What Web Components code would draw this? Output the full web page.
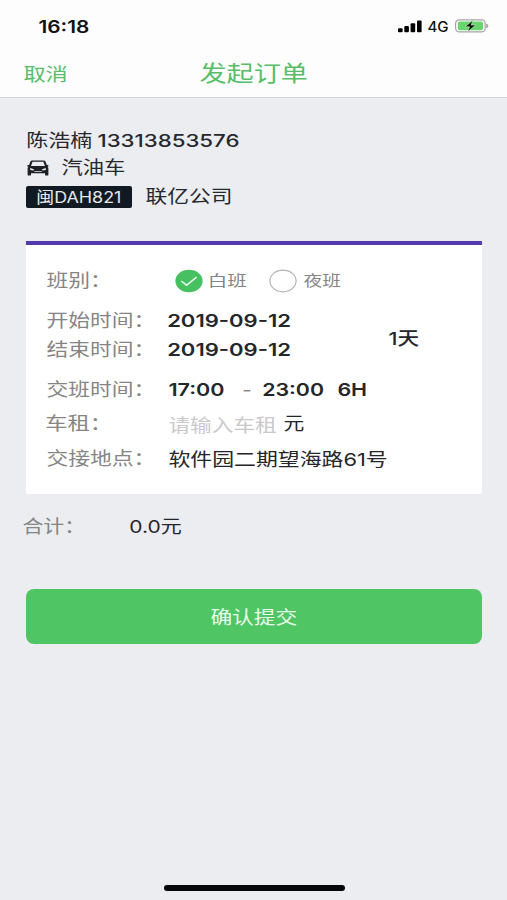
<!DOCTYPE html>
<html lang="zh-CN">
<head>
<meta charset="utf-8">
<title>发起订单</title>
<style>
html,body{margin:0;padding:0}
body{width:507px;height:900px;overflow:hidden;background:#ecedf1;font-family:Inter,"Noto Sans CJK SC",sans-serif}
</style>
</head>
<body>
<order-page></order-page>
<script>
function define(name, html) {
  customElements.define(name, class extends HTMLElement {
    connectedCallback() {
      if (this.shadowRoot) return;
      this.attachShadow({mode: 'open'}).innerHTML = html;
    }
  });
}

// Wide label: its glyphs fill exactly the width given in "w".
const ctx = document.createElement('canvas').getContext('2d');
customElements.define('wide-text', class extends HTMLElement {
  connectedCallback() {
    if (this.shadowRoot) return;
    const size = this.getAttribute('size') || 17.7;
    const weight = this.getAttribute('weight') || 400;
    const width = +this.getAttribute('w');
    const gap = this.getAttribute('gap') || 0;
    const dy = +(this.getAttribute('dy') || 0) + .3;
    const text = this.getAttribute('text');
    ctx.font = `${weight} ${size}px Inter, "Noto Sans CJK SC", sans-serif`;
    const m = ctx.measureText(text);
    const k = width / (m.actualBoundingBoxLeft + m.actualBoundingBoxRight);
    this.attachShadow({mode: 'open'}).innerHTML = `<style>
      :host{display:block;flex:none;width:${width}px;height:24px;margin-left:${gap}px}
      span{display:block;width:max-content;white-space:nowrap;font-size:${size}px;font-weight:${weight};line-height:24px;
        transform-origin:0 50%;transform:translate(${m.actualBoundingBoxLeft * k - .6}px,${dy}px) scaleX(${k})}
      </style><span></span>`;
    this.shadowRoot.querySelector('span').textContent = text;
  }
});

define('signal-bars', `<style>:host{display:block;width:24px;height:13px}svg{display:block}</style>
<svg width="24" height="13" viewBox="0 0 24 13"><rect x="0" y="8.2" width="4.6" height="4" rx="1"/><rect x="6.3" y="6" width="4.6" height="6.2" rx="1"/><rect x="12.6" y="3.3" width="4.6" height="8.9" rx="1"/><rect x="19" y=".5" width="4.6" height="11.7" rx="1"/></svg>`);

define('battery-icon', `<style>:host{display:block;width:34px;height:14px}svg{display:block}</style>
<svg width="34" height="14" viewBox="0 0 34 14"><rect x=".6" y=".9" width="29.6" height="12" rx="3.6" fill="#fff" stroke="#a3a5a3" stroke-width="1.2"/><rect x="2.8" y="2.6" width="25.2" height="8.6" rx="1.8" fill="#6bd56d"/><path d="M31.2 4.6q2.2.6 2.2 2.3t-2.2 2.3z" fill="#a3a5a3"/><path d="M17.8 1.2 10.3 7.8H14.6L12.8 12.8 20.6 6.1H16.2Z" fill="#111" stroke="#d9f5d8" stroke-width=".5"/></svg>`);

define('car-icon', `<style>:host{display:block;width:22px;height:16px}svg{display:block}</style>
<svg width="22" height="16" viewBox="0 0 22 16"><path fill="#1c1f24" fill-rule="evenodd" d="M5.3.4H16.6Q18 .4 18.5 1.6L19.8 5H21.3V6.7H20.4Q21.4 7.3 21.4 8.7V14.8Q21.4 15.4 20.8 15.4H18.6Q18 15.4 18 14.8V13.2H4V14.8Q4 15.4 3.4 15.4H1.2Q.6 15.4 .6 14.8V8.7Q.6 7.3 1.6 6.7H.5V5H2.1L3.4 1.6Q3.8 .4 5.3 .4ZM5.5 1.8 4 5.9H17.9L16.4 1.8ZM3.2 8.1V9.9L6.8 10.6V9.3ZM18.8 8.1 15.2 9.3V10.6L18.8 9.9ZM7.3 10.9V11.8H14.7V10.9Z"/></svg>`);

define('radio-dot', `<style>:host{display:block;width:28px;height:24px;flex:none}svg{display:block}
.on{display:none}:host([checked]) .on{display:block}:host([checked]) .off{display:none}</style>
<svg width="28" height="24" viewBox="0 0 28 24"><g class="off"><ellipse cx="14" cy="12" rx="13.1" ry="10.8" fill="#fff" stroke="#b4b4b4" stroke-width="1.2"/></g><g class="on"><ellipse cx="14" cy="12" rx="13.6" ry="11.2" fill="#47c062"/><path d="M6.3 12 11.6 16.2 21.6 8.2" fill="none" stroke="#e6fbe9" stroke-width="1.5"/></g></svg>`);

define('status-bar', `<style>:host{display:flex;align-items:center;height:52px;padding-left:38.5px;color:#111}
signal-bars{margin-left:308px}battery-icon{margin-left:6px}</style>
<wide-text text="16:18" w="51" size="17" weight="600" dy=".3"></wide-text><signal-bars></signal-bars>
<wide-text text="4G" w="20.5" size="14.2" weight="500" gap="6.5" dy=".3"></wide-text><battery-icon></battery-icon>`);

define('nav-bar', `<style>:host{display:flex;align-items:center;height:45px;padding-left:23.5px;color:#58bd69;border-bottom:1px solid #d5d6d9}</style>
<wide-text text="取消" w="43.5" dy="-.7"></wide-text><wide-text text="发起订单" w="107.5" size="21.8" gap="133" dy="-2.7"></wide-text>`);

define('plate-tag', `<style>:host{display:flex;align-items:center;width:106px;height:22px;box-sizing:border-box;padding-left:12px;border-radius:2px;background:#111a22;color:#e4e8ec}</style>
<wide-text text="闽DAH821" w="82.5" size="15.4" dy=".3"></wide-text>`);

define('driver-info', `<style>:host{display:block;padding:30px 0 0 27px;color:#26282d}div{display:flex;align-items:center}
.a{height:25px}.b{height:29px}.c{height:29px}.a{padding-left:.7px}car-icon{margin-left:-.5px}plate-tag{margin-left:-1px}</style>
<div class="a"><wide-text text="陈浩楠" w="64" dy="-.7"></wide-text><wide-text text="13313853576" w="141" weight="500" size="17.2" gap="6.5" dy="-.7"></wide-text></div>
<div class="b"><car-icon></car-icon><wide-text text="汽油车" w="63" gap="13.7" dy="-.7"></wide-text></div>
<div class="c"><plate-tag></plate-tag><wide-text text="联亿公司" w="85" gap="14" dy="-.3"></wide-text></div>`);

define('form-row', `<style>:host{display:flex;align-items:center;height:24px;margin-top:var(--mt,0px);color:#25262a}
.label{width:122px;flex:none;color:#858585}</style><div class="label"><slot name="label"></slot></div><slot></slot>`);

define('order-card', `<style>:host{display:block;box-sizing:border-box;width:456px;height:253px;margin:30px 0 0 26px;padding:24px 0 0 21.2px;background:#fff;border-top:4px solid #5338ae;border-radius:0 0 2px 2px}
.g{color:#858585}.ph{color:#c9c9cb}
.dates{display:flex;align-items:center;margin-top:16px}.days{color:#25262a;padding-top:6px}</style>
<form-row><wide-text slot="label" text="班别：" w="51"></wide-text><radio-dot checked style="margin-left:5.8px"></radio-dot><wide-text class="g" text="白班" w="36.5" size="15" gap="8.5"></wide-text><radio-dot style="margin-left:21.5px"></radio-dot><wide-text class="g" text="夜班" w="37.5" size="15" gap="7"></wide-text></form-row>
<div class="dates"><div>
<form-row><wide-text slot="label" text="开始时间：" w="94.5"></wide-text><wide-text text="2019-09-12" w="121.5" weight="600" size="17.4"></wide-text></form-row>
<form-row style="--mt:5px"><wide-text slot="label" text="结束时间：" w="94.5"></wide-text><wide-text text="2019-09-12" w="121.5" weight="600" size="17.4"></wide-text></form-row>
</div><wide-text class="days" text="1天" w="31" weight="500" gap="98.5"></wide-text></div>
<form-row style="--mt:16px"><wide-text slot="label" text="交班时间：" w="94.5"></wide-text><wide-text text="17:00" w="55.5" weight="600" size="17.4"></wide-text><wide-text class="g" text="-" w="7" gap="19.5"></wide-text><wide-text text="23:00" w="60" weight="600" size="17.4" gap="12.5"></wide-text><wide-text text="6H" w="28.5" weight="600" size="17.4" gap="14"></wide-text></form-row>
<form-row style="--mt:10px"><wide-text slot="label" text="车租：" w="51"></wide-text><wide-text class="ph" text="请输入车租" w="107.5" dy="2"></wide-text><wide-text text="元" w="20" gap="7"></wide-text></form-row>
<form-row style="--mt:11px"><wide-text slot="label" text="交接地点：" w="94.5"></wide-text><wide-text text="软件园二期望海路61号" w="218.5" dy="1"></wide-text></form-row>`);

define('total-row', `<style>:host{display:flex;align-items:center;height:24px;margin:20px 0 0 22.5px;color:#25262a}.g{color:#858585}</style>
<wide-text class="g" text="合计：" w="49" dy=".3"></wide-text><wide-text text="0.0元" w="50.5" gap="59" dy=".3"></wide-text>`);

define('submit-button', `<style>:host{display:flex;align-items:center;justify-content:center;width:456px;height:55px;margin:51px 0 0 26px;border-radius:8px;background:#4fc663;color:#e9fbec}</style>
<wide-text text="确认提交" w="86" dy=".3"></wide-text>`);

define('order-page', `<style>:host{display:flex;flex-direction:column;width:507px;height:900px;background:#ecedf1}
header{background:#fdfdfd}.home{width:181px;height:6px;border-radius:3px;background:#05070a;margin:auto 0 9px 164px}</style>
<header><status-bar></status-bar><nav-bar></nav-bar></header><driver-info></driver-info><order-card></order-card><total-row></total-row><submit-button></submit-button><div class="home"></div>`);
</script>
</body>
</html>
